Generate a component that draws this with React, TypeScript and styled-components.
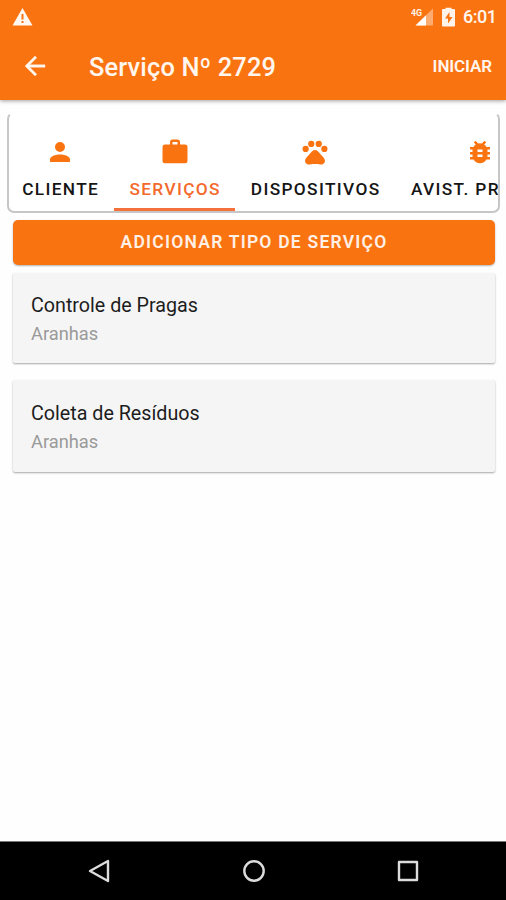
import React from 'react';
import styled, { createGlobalStyle } from 'styled-components';

const ORANGE = '#fa7311';

const GlobalStyle = createGlobalStyle`
  * { box-sizing: border-box; }
  body { margin: 0; background: #fff; font-family: Roboto, "Liberation Sans", sans-serif; }
`;

const Screen = styled.div`
  display: flex;
  flex-direction: column;
  height: 900px;
  width: 506px;
  overflow: hidden;
  background: #fefefe;
`;

const Header = styled.header`
  flex: none;
  height: 100px;
  background: ${ORANGE};
  color: #fff6ee;
  box-shadow: 0 1px 4px rgba(0, 0, 0, 0.38);
`;

const StatusBar = styled.div`
  display: flex;
  align-items: center;
  height: 33px;
  padding: 0 10px 0 12px;
`;

const StatusIcons = styled.div`
  display: flex;
  align-items: center;
  gap: 8px;
  margin-left: auto;
`;

const Clock = styled.span`
  width: 33px;
  font-size: 18px;
  font-weight: 500;
  line-height: 33px;
  white-space: nowrap;
  letter-spacing: -0.5px;
`;

const Toolbar = styled.div`
  display: flex;
  align-items: center;
  height: 66px;
  padding: 0 14px 0 20px;
`;

const BackButton = styled.button`
  display: flex;
  padding: 0;
  border: 0;
  background: none;
  color: inherit;
`;

const Title = styled.h1`
  margin: 2px 0 0 39px;
  font-size: 25.4px;
  font-weight: 500;
  line-height: 30px;
  letter-spacing: 0.15px;
  white-space: nowrap;
`;

const StartButton = styled.button`
  margin-left: auto;
  padding: 0;
  border: 0;
  background: none;
  color: inherit;
  font: 600 17px/24px Roboto, sans-serif;
  letter-spacing: -0.1px;
`;

const Main = styled.main`
  flex: 1;
  padding-top: 12px;
`;

const Tabs = styled.nav`
  display: flex;
  height: 101px;
  margin: 0 6px 0 7px;
  overflow: hidden;
  border: 2px solid #c6c6c6;
  border-top-color: transparent;
  border-radius: 7px;
  background: #fff;
`;

const Tab = styled.div<{ $width: number; $active?: boolean }>`
  display: flex;
  flex: none;
  flex-direction: column;
  align-items: center;
  width: ${(p) => p.$width}px;
  height: 97px;
  padding-top: 23px;
  border-bottom: 3px solid ${(p) => (p.$active ? '#f4713c' : 'transparent')};
  color: ${(p) => (p.$active ? '#f36a2c' : '#151515')};

  &:first-child {
    margin-left: -3px;
  }
`;

const TabLabel = styled.span`
  margin-top: 11px;
  font-size: 17.3px;
  font-weight: 500;
  line-height: 22px;
  letter-spacing: 1.35px;
  margin-right: -1.35px;
  white-space: nowrap;
`;

const AddButton = styled.button`
  display: block;
  width: 482px;
  height: 45px;
  margin: 7px 0 0 13px;
  padding: 0;
  border: 0;
  border-radius: 5px;
  background: ${ORANGE};
  color: #fff0e6;
  font: 600 17.5px/45px Roboto, sans-serif;
  letter-spacing: 1.22px;
  text-align: center;
  box-shadow: 0 1px 2px rgba(0, 0, 0, 0.3);
`;

const ServiceList = styled.div`
  display: flex;
  flex-direction: column;
  gap: 17px;
  padding: 8px 11px 0 13px;
`;

const ServiceCard = styled.article<{ $height: number }>`
  display: flex;
  flex-direction: column;
  justify-content: center;
  height: ${(p) => p.$height}px;
  padding: 4px 18px 0;
  border-radius: 2px;
  background: #f5f5f5;
  box-shadow: 0 1px 2px rgba(0, 0, 0, 0.35);
`;

const ServiceName = styled.h2`
  margin: 0;
  color: #1d1d1d;
  font-size: 19.7px;
  font-weight: 400;
  line-height: 28px;
`;

const ServiceDetail = styled.p`
  margin: 0;
  color: #9a9a9a;
  font-size: 18.3px;
  line-height: 28px;
`;

const NavBar = styled.footer`
  display: grid;
  grid-template-columns: repeat(3, 154.5px);
  justify-content: center;
  flex: none;
  height: 59px;
  padding-left: 1px;
  border-top: 1px solid #777;
  background: #000;
`;

const NavButton = styled.div`
  display: flex;
  align-items: center;
  justify-content: center;
`;

const TabIcon = ({ d }: { d: string }) => (
  <svg width="30" height="30" viewBox="0 0 24 24" fill={ORANGE}>
    <path d={d} />
  </svg>
);

const tabs = [
  {
    label: 'CLIENTE',
    width: 108,
    d: 'M12 4a4 4 0 1 1 0 8 4 4 0 0 1 0-8m0 10c4.42 0 8 1.79 8 4v2H4v-2c0-2.21 3.58-4 8-4z',
  },
  {
    label: 'SERVIÇOS',
    width: 121,
    active: true,
    d: 'M10 2h4a2 2 0 0 1 2 2v2h4a2 2 0 0 1 2 2v11a2 2 0 0 1-2 2H4a2 2 0 0 1-2-2V8a2 2 0 0 1 2-2h4V4a2 2 0 0 1 2-2m4 4V4h-4v2h4z',
  },
  {
    label: 'DISPOSITIVOS',
    width: 160,
    d: 'M4.5 7a2.5 2.5 0 1 1 0 5 2.5 2.5 0 0 1 0-5M9 3a2.5 2.5 0 1 1 0 5 2.5 2.5 0 0 1 0-5m6 0a2.5 2.5 0 1 1 0 5 2.5 2.5 0 0 1 0-5m4.5 4a2.5 2.5 0 1 1 0 5 2.5 2.5 0 0 1 0-5M17.34 14.86c-.87-1.02-1.6-1.89-2.48-2.91-.46-.54-1.05-1.08-1.75-1.32a3.2 3.2 0 0 0-2.22 0c-.7.24-1.28.78-1.75 1.32-.87 1.02-1.6 1.89-2.48 2.91-1.31 1.31-2.92 2.76-2.62 4.79.29 1.02 1.02 2.03 2.33 2.32.73.15 3.06-.44 5.54-.44h.18c2.48 0 4.81.58 5.54.44 1.31-.29 2.04-1.31 2.33-2.32.31-2.04-1.3-3.49-2.62-4.79z',
  },
  {
    label: 'AVIST. PRAGAS',
    width: 170,
    d: 'M20 8h-2.81a5.98 5.98 0 0 0-1.82-1.96L17 4.41 15.59 3l-2.17 2.17a6 6 0 0 0-2.83 0L8.41 3 7 4.41l1.62 1.63C7.88 6.55 7.26 7.22 6.81 8H4v2h2.09c-.05.33-.09.66-.09 1v1H4v2h2v1c0 .34.04.67.09 1H4v2h2.81c1.04 1.79 2.97 3 5.19 3s4.15-1.21 5.19-3H20v-2h-2.09c.05-.33.09-.66.09-1v-1h2v-2h-2v-1c0-.34-.04-.67-.09-1H20V8zm-6 8h-4v-2h4v2zm0-4h-4v-2h4v2z',
  },
];

const services = [
  { name: 'Controle de Pragas', detail: 'Aranhas', height: 90 },
  { name: 'Coleta de Resíduos', detail: 'Aranhas', height: 92 },
];

export default function App() {
  return (
    <Screen>
      <GlobalStyle />
      <Header>
        <StatusBar>
          <svg width="21" height="18" viewBox="0 0 21 18">
            <path d="M10.5 0 20.5 17.5H.5z" fill="#fff7f0" />
            <path d="M9.5 6h2v5.5h-2zM9.5 13h2v2h-2z" fill={ORANGE} />
          </svg>
          <StatusIcons>
            <svg width="23" height="20" viewBox="0 0 23 20">
              <path d="M22 1.5v17H4.5z" fill="#fcac70" />
              <path d="M15 8.3v10.2H4.5z" fill="#fff" />
              <text x="0" y="8.5" fontSize="9.5" fontWeight="700" fill="#fff3ea" textLength="11" lengthAdjust="spacingAndGlyphs">4G</text>
            </svg>
            <svg width="13" height="20" viewBox="0 0 13 20">
              <path d="M3.5 2V.8h6V2H12q1 0 1 1v15.5q0 1-1 1H1q-1 0-1-1V3q0-1 1-1z" fill="#fff3ea" />
              <path d="M7.5 5 3 11.5h3v5l4.5-6.5h-3z" fill={ORANGE} />
            </svg>
            <Clock>6:01</Clock>
          </StatusIcons>
        </StatusBar>
        <Toolbar>
          <BackButton aria-label="Voltar">
            <svg width="30" height="30" viewBox="0 0 24 24" fill="currentColor">
              <path d="M20 11H7.83l5.59-5.59L12 4l-8 8 8 8 1.41-1.41L7.83 13H20v-2z" stroke="currentColor" strokeWidth=".3" />
            </svg>
          </BackButton>
          <Title>Serviço Nº 2729</Title>
          <StartButton>INICIAR</StartButton>
        </Toolbar>
      </Header>
      <Main>
        <Tabs>
          {tabs.map((t) => (
            <Tab key={t.label} $width={t.width} $active={t.active}>
              <TabIcon d={t.d} />
              <TabLabel>{t.label}</TabLabel>
            </Tab>
          ))}
        </Tabs>
        <AddButton>ADICIONAR TIPO DE SERVIÇO</AddButton>
        <ServiceList>
          {services.map((s) => (
            <ServiceCard key={s.name} $height={s.height}>
              <ServiceName>{s.name}</ServiceName>
              <ServiceDetail>{s.detail}</ServiceDetail>
            </ServiceCard>
          ))}
        </ServiceList>
      </Main>
      <NavBar>
        <NavButton>
          <svg width="24" height="24" viewBox="0 0 24 24" fill="none" stroke="#dcdcdc" strokeWidth="2.4" strokeLinejoin="round">
            <path d="M21 2v20L3 12z" />
          </svg>
        </NavButton>
        <NavButton>
          <svg width="24" height="24" viewBox="0 0 24 24" fill="none" stroke="#dcdcdc" strokeWidth="2.4">
            <circle cx="12" cy="12" r="9.7" />
          </svg>
        </NavButton>
        <NavButton>
          <svg width="24" height="24" viewBox="0 0 24 24" fill="none" stroke="#dcdcdc" strokeWidth="2.4" strokeLinejoin="round">
            <path d="M3 3h18v18H3z" />
          </svg>
        </NavButton>
      </NavBar>
    </Screen>
  );
}
